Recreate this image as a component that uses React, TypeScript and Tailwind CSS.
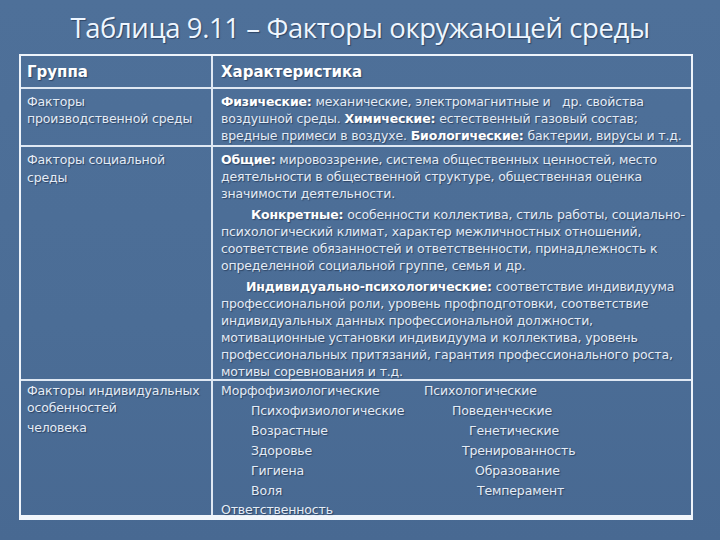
const pairs: [string, string, string, string][] = [
  ["Морфофизиологические", "Психологические", "pl-0", "pl-0"],
  ["Психофизиологические", "Поведенческие", "pl-[30px]", "pl-[28px]"],
  ["Возрастные", "Генетические", "pl-[30px]", "pl-[45px]"],
  ["Здоровье", "Тренированность", "pl-[30px]", "pl-[38px]"],
  ["Гигиена", "Образование", "pl-[30px]", "pl-[51px]"],
  ["Воля", "Темперамент", "pl-[30px]", "pl-[53px]"],
];

const B = ({ children }: { children: React.ReactNode }) => (
  <span className="font-bold text-white">{children}</span>
);

export default function App() {
  return (
    <div
      className="w-[720px] h-[540px] overflow-hidden bg-[#4b6d96] bg-[linear-gradient(180deg,#4e7099_0%,#4b6d96_60%,#486992_100%)] text-[#e4ecf6] [text-shadow:1px_1px_1px_rgba(20,35,60,0.55)]"
      style={{ fontFamily: '"DejaVu Sans", Verdana, sans-serif' }}
    >
      <h1 className="h-[54px] pt-[12px] text-center text-[27.5px] leading-[32px] tracking-[-0.4px] text-[#eef6ff] [font-family:'Open_Sans',sans-serif]">
        Таблица 9.11 – Факторы окружающей среды
      </h1>

      <div className="ml-[19px] w-[674px] border-2 border-[#eef4fb] border-b-[5px] border-b-[#f2f6fb]">
        {/* header */}
        <div className="flex h-[33px] border-b-2 border-[#dfe8f3]">
          <div className="w-[192px] border-r-2 border-[#dfe8f3] pl-[6px] pt-[5px] text-[15px] font-bold text-white">
            Группа
          </div>
          <div className="flex-1 pl-[8px] pt-[5px] text-[15px] font-bold text-white">Характеристика</div>
        </div>

        {/* row 1 */}
        <div className="flex h-[58px] border-b-2 border-[#dfe8f3] text-[12.5px] leading-[17px] tracking-[-0.15px]">
          <div className="w-[192px] border-r-2 border-[#dfe8f3] pl-[6px] pt-[4px]">
            Факторы
            <br />
            производственной среды
          </div>
          <div className="flex-1 pl-[8px] pt-[4px] pr-[3px]">
            <B>Физические:</B> механические, электромагнитные и&nbsp;&nbsp; др. свойства воздушной среды.{" "}
            <B>Химические:</B> естественный газовый состав; вредные примеси в воздухе. <B>Биологические:</B>{" "}
            бактерии, вирусы и т.д.
          </div>
        </div>

        {/* row 2 */}
        <div className="flex h-[234px] border-b-2 border-[#dfe8f3] text-[12.5px] leading-[17px] tracking-[-0.15px]">
          <div className="w-[192px] border-r-2 border-[#dfe8f3] pl-[6px] pt-[4px] leading-[18px]">
            Факторы социальной
            <br />
            среды
          </div>
          <div className="flex-1 pl-[8px] pt-[4px] pr-[3px]">
            <p>
              <B>Общие:</B> мировоззрение, система общественных ценностей, место деятельности в общественной
              структуре, общественная оценка значимости деятельности.
            </p>
            <p className="mt-[4px] indent-[30px]">
              <B>Конкретные:</B> особенности коллектива, стиль работы, социально-психологический климат, характер
              межличностных отношений, соответствие обязанностей и ответственности, принадлежность к
              определенной социальной группе, семья и др.
            </p>
            <p className="mt-[4px] indent-[25px]">
              <B>Индивидуально-психологические:</B> соответствие индивидуума профессиональной роли, уровень
              профподготовки, соответствие индивидуальных данных профессиональной должности, мотивационные
              установки индивидуума и коллектива, уровень профессиональных притязаний, гарантия
              профессионального роста, мотивы соревнования и т.д.
            </p>
          </div>
        </div>

        {/* row 3 */}
        <div className="flex h-[134px] text-[12.5px] tracking-[-0.15px]">
          <div className="w-[192px] border-r-2 border-[#dfe8f3] pl-[6px] pt-[1px] leading-[17px]">
            Факторы индивидуальных
            <br />
            особенностей
            <br />
            <span className="mt-[3px] inline-block">человека</span>
          </div>
          <div className="flex-1 pl-[8px]">
            {pairs.map(([a, b, pa, pb]) => (
              <div key={a} className="flex h-[20px] items-center">
                <span className={`w-[203px] shrink-0 ${pa}`}>{a}</span>
                <span className={pb}>{b}</span>
              </div>
            ))}
            <div className="h-[17px] leading-[17px]">Ответственность</div>
          </div>
        </div>
      </div>
    </div>
  );
}
